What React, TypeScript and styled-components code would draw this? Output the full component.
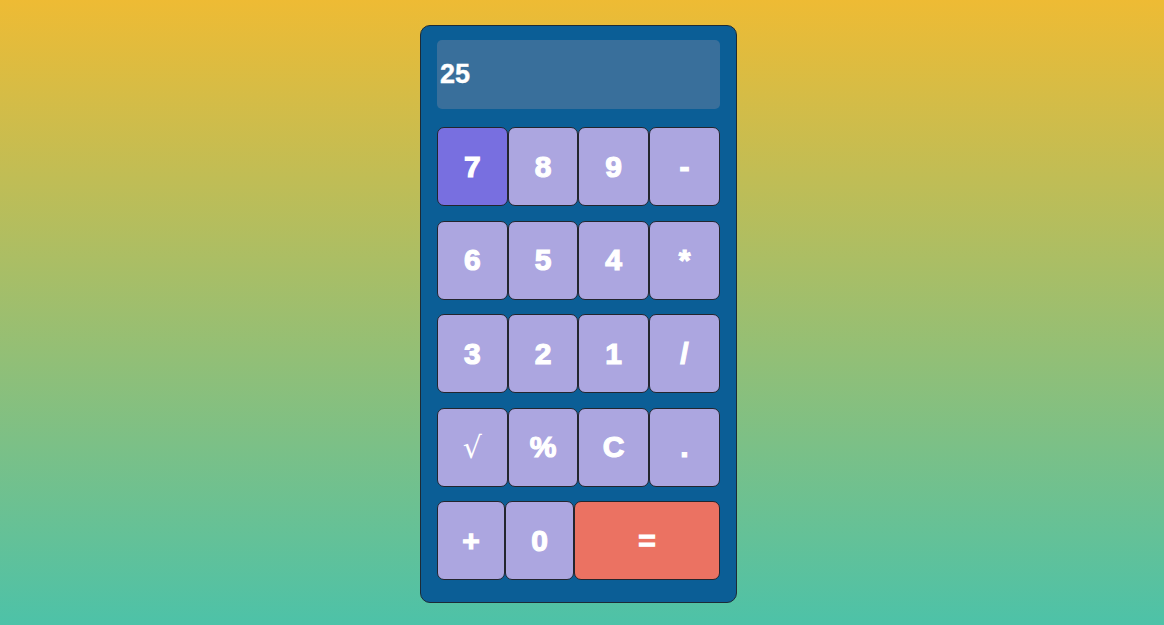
import React, { useState } from 'react'
import styled, { createGlobalStyle } from 'styled-components'

const GlobalStyle = createGlobalStyle`
  html, body {
    margin: 0;
    padding: 0;
  }
  body {
    min-height: 100vh;
    background: linear-gradient(180deg, #eebb34 0%, #4dc2a8 100%);
    font-family: "Liberation Sans", Arial, sans-serif;
  }
`

const Page = styled.div`
  display: flex;
  justify-content: center;
  padding: 25px 7px 0 0;
  min-height: 100vh;
  box-sizing: border-box;
`

const Calculator = styled.div`
  width: 317px;
  height: 578px;
  box-sizing: border-box;
  background: #0b5e96;
  border: 1px solid #1d2b36;
  border-radius: 10px;
  padding: 14px 16px 22px 16px;
  display: flex;
  flex-direction: column;
`

const Display = styled.div`
  height: 69px;
  background: #396f9b;
  border-radius: 5px;
  display: flex;
  align-items: center;
  padding-left: 3px;
  color: #fff;
  font-family: "Liberation Sans", Arial, sans-serif;
  font-weight: bold;
  font-size: 27px;
  -webkit-text-stroke: 0.4px #fff;
  margin-bottom: 18px;
`

const Row = styled.div`
  display: flex;
  height: 79px;
  margin-bottom: 14.5px;
  &:last-child {
    margin-bottom: 0;
  }
`

const Key = styled.button<{ $w: number; $tone?: 'active' | 'equal' }>`
  width: ${p => p.$w}px;
  height: 100%;
  box-sizing: border-box;
  margin: 0;
  padding: 0;
  border: 1px solid #23252e;
  border-radius: 7px;
  background: ${p => (p.$tone === 'active' ? '#786fe0' : p.$tone === 'equal' ? '#eb7262' : '#aca6e0')};
  color: #fff;
  font-family: "Liberation Sans", Arial, sans-serif;
  font-weight: bold;
  font-size: 30px;
  -webkit-text-stroke: 1.2px #fff;
  cursor: pointer;
  display: flex;
  align-items: center;
  justify-content: center;
`

const Root = styled.span`
  font-family: "DejaVu Serif", "Liberation Serif", serif;
  font-weight: normal;
  font-size: 30px;
  -webkit-text-stroke: 0;
`

const rows: string[][] = [
  ['7', '8', '9', '-'],
  ['6', '5', '4', '*'],
  ['3', '2', '1', '/'],
  ['√', '%', 'C', '.'],
]

export default function App() {
  const [value] = useState('25')

  return (
    <>
      <GlobalStyle />
      <Page>
        <Calculator>
          <Display>{value}</Display>
          {rows.map((row, i) => (
            <Row key={i}>
              {row.map((k, j) => (
                <Key key={k} $w={j === 3 ? 71 : 70.7} $tone={k === '7' ? 'active' : undefined}>
                  {k === '√' ? <Root>{k}</Root> : k}
                </Key>
              ))}
            </Row>
          ))}
          <Row>
            <Key $w={68}>+</Key>
            <Key $w={69}>0</Key>
            <Key $w={146} $tone="equal">=</Key>
          </Row>
        </Calculator>
      </Page>
    </>
  )
}
